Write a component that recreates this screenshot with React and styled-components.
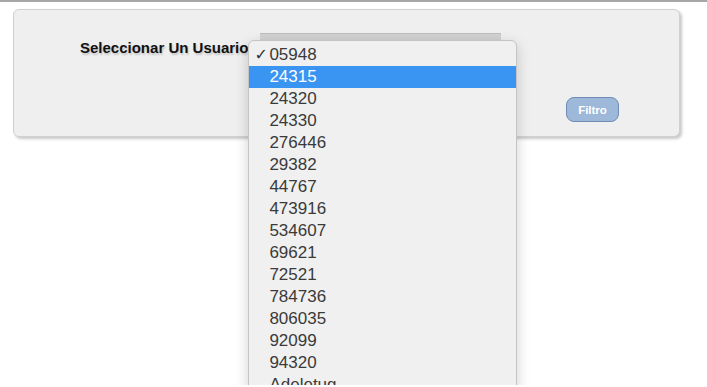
import React, {useState} from "react";
import styled, {createGlobalStyle} from "styled-components";

const GlobalStyle = createGlobalStyle`
	html, body {
		margin: 0;
		padding: 0;
		overflow: hidden;
		background: #fff;
		font-family: "Liberation Sans", Arial, sans-serif;
	}
`;

const Page = styled.div`
	border-top: 2px solid #a6a6a6;
	padding: 7px 0 0 13px;
	height: 385px;
	box-sizing: border-box;
`;

const Panel = styled.div`
	width: 667px;
	height: 128px;
	box-sizing: border-box;
	background: #efefef;
	border: 1px solid #d0d0d0;
	border-radius: 6px;
	box-shadow: 2px 2px 3px rgba(0, 0, 0, 0.22);
	padding: 23px 60px 0 66px;
	display: flex;
	flex-direction: column;
`;

const FieldRow = styled.div`
	display: flex;
	align-items: flex-start;
	gap: 12px;
`;

const Label = styled.label`
	font-size: 15px;
	font-weight: bold;
	color: #111;
	text-shadow: 1px 2px 2px rgba(0, 0, 0, 0.18);
	padding-top: 6px;
`;

const SelectWrap = styled.div`
	position: relative;
	width: 241px;
	height: 22px;
	background: #d2d2d2;
	border-top: 1px solid #bdbdbd;
	box-sizing: border-box;
`;

const Menu = styled.ul`
	position: absolute;
	left: -12px;
	top: 6px;
	width: 269px;
	margin: 0;
	padding: 3px 0 0;
	list-style: none;
	box-sizing: border-box;
	background: #f0f0f0;
	border: 1px solid #c4c4c4;
	border-radius: 6px;
	box-shadow: 0 4px 14px rgba(0, 0, 0, 0.18);
	z-index: 10;
`;

const Item = styled.li`
	position: relative;
	height: 22px;
	line-height: 22px;
	padding-left: 20px;
	font-size: 17px;
	color: ${p => p.$active ? "#fff" : "#3a3a3a"};
	background: ${p => p.$active ? "#3a95f2" : "transparent"};
`;

const Check = styled.span`
	position: absolute;
	left: 5px;
	top: 0;
	font-size: 16px;
	color: #333;
	font-family: "DejaVu Sans", sans-serif;
`;

const ButtonRow = styled.div`
	display: flex;
	justify-content: flex-end;
	margin-top: 41px;
`;

const FilterButton = styled.button`
	width: 53px;
	height: 25px;
	border: 1px solid #6e8cb4;
	border-radius: 8px;
	background: #9eb8d9;
	color: #fff;
	font-family: "Liberation Sans", Arial, sans-serif;
	font-size: 11.5px;
	font-weight: bold;
	padding: 0;
`;

const usuarios = [
	"05948", "24315", "24320", "24330", "276446", "29382", "44767", "473916",
	"534607", "69621", "72521", "784736", "806035", "92099", "94320", "Adeletug"
];

export default function App() {
	const [selected] = useState("05948");
	const hover = "24315";

	return (
		<>
			<GlobalStyle/>
			<Page>
				<Panel>
					<FieldRow>
						<Label>Seleccionar Un Usuario</Label>
						<SelectWrap>
							<Menu>
								{usuarios.map(u => (
									<Item key={u} $active={u === hover}>
										{u === selected && <Check>✓</Check>}
										{u}
									</Item>
								))}
							</Menu>
						</SelectWrap>
					</FieldRow>
					<ButtonRow>
						<FilterButton>Filtro</FilterButton>
					</ButtonRow>
				</Panel>
			</Page>
		</>
	)
}
